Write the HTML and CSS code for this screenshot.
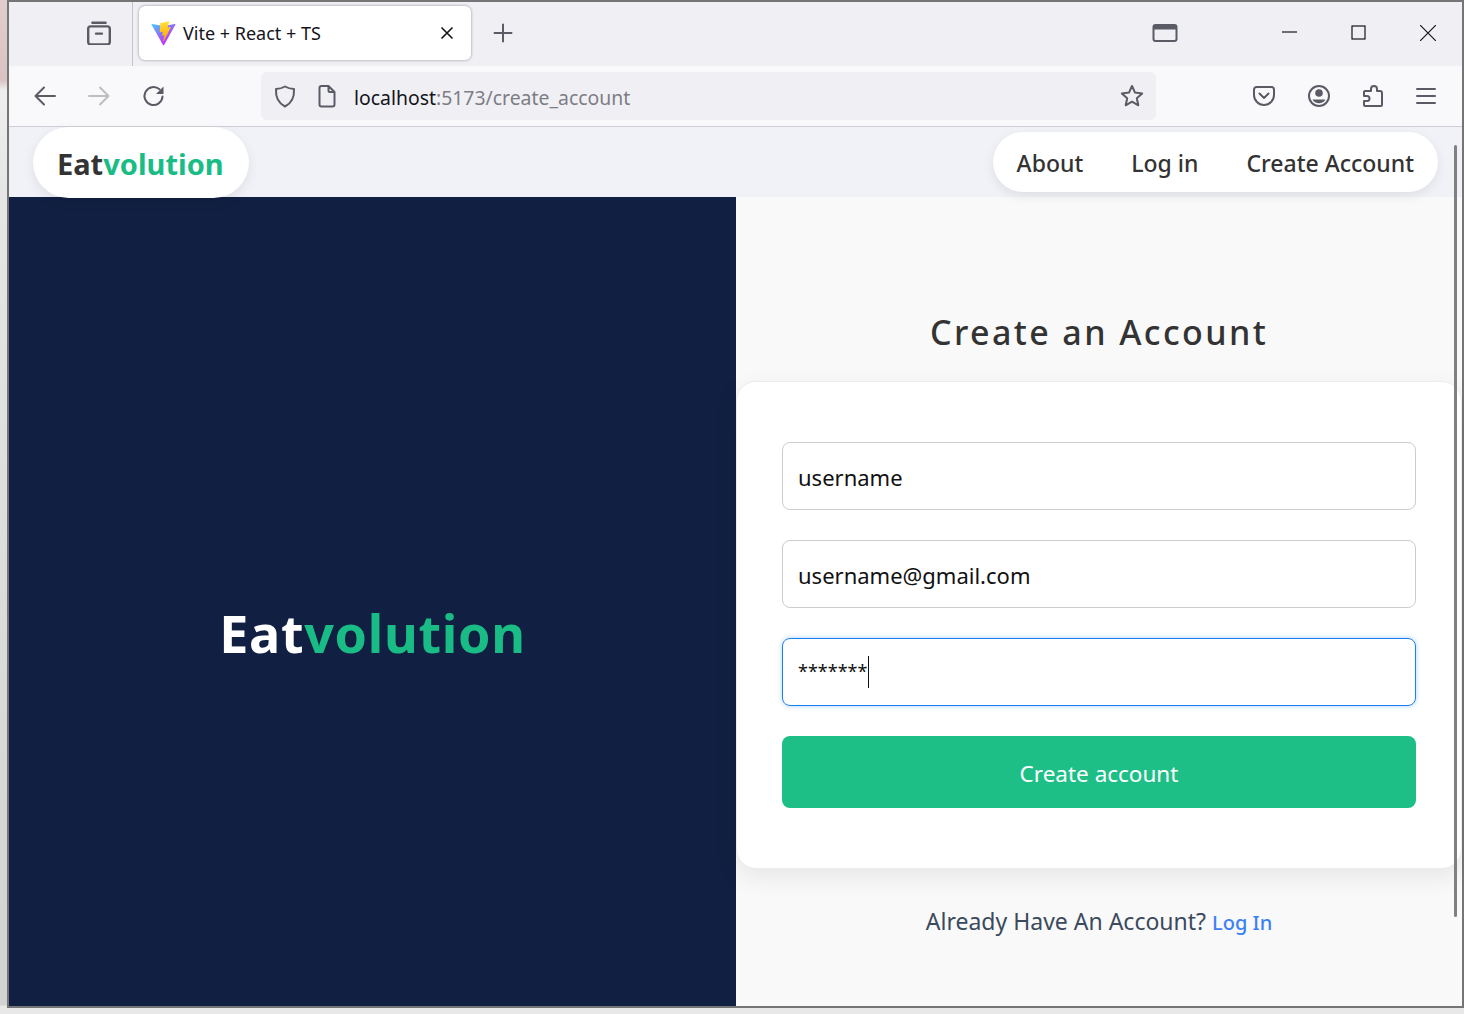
FILE: index.html
```html
<!DOCTYPE html>
<html lang="en">
<head>
  <meta charset="UTF-8">
  <title>Vite + React + TS</title>
  <link rel="stylesheet" href="styles.css">
</head>
<body>

  <div class="window">
    <!-- Tab strip -->
    <div class="tabbar">
      <div class="tab-side">
        <svg class="icon" viewBox="2 1.500 20 20"><path d="M6.500 3h11M3 8a2 2 0 0 1 2-2h14a2 2 0 0 1 2 2v11a2 2 0 0 1-2 2H5a2 2 0 0 1-2-2zM9.500 12h5"/></svg>
      </div>
      <div class="tab">
        <svg class="favicon" viewBox="0 0 410 404">
          <defs>
            <linearGradient id="viteA" x1="6" y1="33" x2="235" y2="344" gradientUnits="userSpaceOnUse"><stop offset="0" stop-color="#41D1FF"/><stop offset="1" stop-color="#BD34FE"/></linearGradient>
            <linearGradient id="viteB" x1="194" y1="8" x2="236" y2="292" gradientUnits="userSpaceOnUse"><stop offset="0" stop-color="#FFEA83"/><stop offset=".08" stop-color="#FFDD35"/><stop offset="1" stop-color="#FFA800"/></linearGradient>
          </defs>
          <path fill="url(#viteA)" d="M399.6 59.5 215 389.6c-3.8 6.8-13.6 6.9-17.5.1L9.3 59.5C5.1 52.1 11.4 43.2 19.8 44.7l184.8 33c1.2.2 2.4.2 3.6 0l180.9-33c8.4-1.5 14.700 7.300 10.500 14.800Z"/>
          <path fill="url(#viteB)" d="M292.900 1.600 156.300 28.400c-2.200.4-3.900 2.300-4 4.600l-8.400 142.100c-.2 3.300 2.900 5.900 6.100 5.200l38-8.800c3.600-.8 6.800 2.300 6.100 5.900l-11.300 55.300c-.8 3.700 2.700 6.900 6.300 5.800l23.500-7.100c3.600-1.100 7.100 2.100 6.300 5.800l-18 87c-1.100 5.400 6.100 8.400 9.100 3.700l2-3.100L323.500 104c1.900-3.700-1.300-7.900-5.400-7.100l-39.300 7.600c-3.700.7-6.800-2.700-5.800-6.300l25.700-89c1-3.700-2.200-7.100-5.800-6.400Z"/>
        </svg>
        <span class="tab-title">Vite + React + TS</span>
        <svg class="tab-close" viewBox="0 0 16 16"><path d="M2.500 2.500l11 11M13.500 2.500l-11 11"/></svg>
      </div>
      <svg class="icon new-tab" viewBox="0 0 24 24"><path d="M12 3.500v17M3.500 12h17"/></svg>
      <div class="tab-spacer"></div>
      <svg class="icon window-list" viewBox="0 0 26 20"><rect x="1.500" y="2" width="23" height="16" rx="2"/><path class="filled" d="M2 2h22v4.500H2z"/></svg>
      <div class="caption">
        <svg viewBox="0 0 16 16"><path d="M0 7h15"/></svg>
        <svg viewBox="0 0 16 16"><rect x="1" y="1" width="13" height="13"/></svg>
        <svg viewBox="0 0 16 16"><path d="M0 0l16 16M16 0L0 16"/></svg>
      </div>
    </div>

    <!-- Address bar -->
    <div class="toolbar">
      <div class="nav-buttons">
        <svg class="icon" viewBox="0 0 24 24"><path d="M22 12H2.500M11 3.500 2.500 12l8.500 8.500"/></svg>
        <svg class="icon disabled" viewBox="0 0 24 24"><path d="M2 12h19.500M13 3.500l8.500 8.500-8.500 8.500"/></svg>
        <svg class="icon" viewBox="-1 0 24 24"><path d="M20.500 12.500a9 9 0 1 1-3-7.200"/><path class="filled" d="M21.500 2.500v7.500h-7.500z"/></svg>
      </div>
      <div class="urlbar">
        <svg class="icon" viewBox="0 0 24 24"><path d="M12 2.500c3 1.800 6 2.400 9 2.600.5 8-1.500 13.500-9 17.400C4.500 18.600 2.500 13.100 3 5.100c3-.2 6-.8 9-2.600Z"/></svg>
        <svg class="icon" viewBox="0 0 24 24"><path d="M4.500 4a2 2 0 0 1 2-2h7l6 6v12.500a2 2 0 0 1-2 2h-11a2 2 0 0 1-2-2zM13.500 2v4.500a1.500 1.500 0 0 0 1.500 1.500h4.500"/></svg>
        <div class="url"><span class="host">localhost</span>:5173/create_account</div>
        <svg class="icon" viewBox="0 0 24 24"><path d="m12 2 3 6.600 7.200.8-5.400 4.800 1.500 7.100L12 17.700l-6.300 3.600 1.500-7.100L1.800 9.400 9 8.600Z"/></svg>
      </div>
      <div class="tools">
        <svg class="icon" viewBox="0 0 24 24"><path d="M4.500 3h15A2.500 2.500 0 0 1 22 5.500V11a10 10 0 0 1-20 0V5.500A2.500 2.500 0 0 1 4.500 3ZM7.500 9.500 12 14l4.500-4.500"/></svg>
        <svg class="icon" viewBox="-1 0 24 24"><circle cx="12" cy="12" r="10"/><circle class="filled" cx="12" cy="9" r="3.800"/><path class="filled" d="M5.500 15.500h13a7.500 7.500 0 0 1-13 0Z"/></svg>
        <svg class="icon" viewBox="-1 0 24 24"><path d="M4 22a1 1 0 0 1-1-1v-4h3a2.500 2.500 0 0 0 0-5H3V8a1 1 0 0 1 1-1h6V5a3 3 0 0 1 6 0v2h3a2 2 0 0 1 2 2v12a1 1 0 0 1-1 1Z"/></svg>
        <svg class="icon" viewBox="0 0 24 24"><path d="M3 5h18M3 12h18M3 19h18"/></svg>
      </div>
    </div>

    <!-- Page -->
    <div class="page">
      <header class="site-header">
        <a class="brand-pill"><span class="eat">Eat</span><span class="volution">volution</span></a>
        <nav class="site-nav">
          <a>About</a>
          <a>Log in</a>
          <a>Create Account</a>
        </nav>
      </header>

      <main class="split">
        <section class="hero">
          <div class="hero-logo"><span>Eat</span><span class="volution">volution</span></div>
        </section>

        <section class="signup">
          <h1>Create an Account</h1>
          <form class="signup-card">
            <div class="field">username</div>
            <div class="field">username@gmail.com</div>
            <div class="field focused"><span class="stars">*******</span><span class="caret"></span></div>
            <button type="button" class="submit-btn">Create account</button>
          </form>
          <p class="login-hint">Already Have An Account? <a>Log In</a></p>
        </section>
      </main>

      <div class="scroll-thumb"></div>
    </div>
  </div>

</body>
</html>
```

FILE: styles.css
```css
body {
  margin: 0;
  height: 1014px;
  overflow: hidden;
  background: linear-gradient(#e2cdcd 0, #d8c2c2 80px, #eeeeee 90px, #e6e6e6 185px, #d2d2d2 1005px, #e8e8e8 1006px);
  font-family: "Noto Sans", "Open Sans", sans-serif;
}

.window {
  width: 1457px;
  height: 1008px;
  margin-left: 7px;
  border: 2px solid #757575;
  box-sizing: border-box;
  display: flex;
  flex-direction: column;
  background: #f9f9fb;
}

.icon {
  width: 24px;
  height: 24px;
  flex: none;
  fill: none;
  stroke: #5b5b66;
  stroke-width: 2;
  stroke-linecap: round;
  stroke-linejoin: round;
}

.icon .filled {
  fill: #5b5b66;
  stroke: none;
}

.icon.disabled {
  stroke: #bdbdc2;
}

/* Tab strip */
.tabbar {
  height: 64px;
  flex: none;
  box-sizing: border-box;
  padding-bottom: 2px;
  display: flex;
  align-items: center;
  background: #f0f0f4;
}

.tab-side {
  width: 124px;
  height: 64px;
  margin-bottom: -2px;
  box-sizing: border-box;
  border-right: 1px solid #c5c5c9;
  display: flex;
  align-items: center;
  justify-content: flex-end;
  padding: 0 21px 2px 0;
  flex: none;
}

.tab {
  width: 332px;
  height: 54px;
  margin-left: 6px;
  box-sizing: border-box;
  padding: 0 16px 0 12px;
  display: flex;
  align-items: center;
  background: white;
  border-radius: 6px;
  box-shadow: 0 0 3px rgba(0, 0, 0, 0.4);
  flex: none;
}

.favicon {
  width: 25px;
  height: 25px;
  flex: none;
}

.tab-title {
  margin-left: 7px;
  flex: 1;
  font-size: 18px;
  color: #15141a;
}

.tab-close {
  width: 16px;
  height: 16px;
  fill: none;
  stroke: #15141a;
  stroke-width: 1.600;
}

.new-tab {
  margin-left: 20px;
}

.tab-spacer {
  flex: 1;
}

.window-list {
  width: 26px;
  height: 20px;
}

.caption {
  display: flex;
  align-items: center;
  gap: 53px;
  margin: 0 26px 0 104px;
}

.caption svg {
  width: 16px;
  height: 16px;
  fill: none;
  stroke: #15141a;
  stroke-width: 1.200;
}

/* Address bar */
.toolbar {
  height: 61px;
  flex: none;
  box-sizing: border-box;
  border-bottom: 1px solid #cfcfd8;
  display: flex;
  align-items: center;
  padding-left: 24px;
}

.nav-buttons {
  display: flex;
  gap: 30px;
  width: 228px;
  flex: none;
}

.urlbar {
  width: 895px;
  height: 48px;
  flex: none;
  margin-top: -1px;
  box-sizing: border-box;
  padding: 0 12px;
  display: flex;
  align-items: center;
  gap: 18px;
  background: #f0f0f4;
  border-radius: 6px;
}

.url {
  flex: 1;
  margin-left: -3px;
  padding-top: 3px;
  font-size: 19.400px;
  color: #7d7d85;
  white-space: nowrap;
}

.host {
  color: #15141a;
}

.tools {
  display: flex;
  gap: 30px;
  margin-left: 96px;
}

/* Page */
.page {
  flex: 1;
  min-height: 0;
  position: relative;
  display: flex;
  flex-direction: column;
  background: #f9f9f9;
  color: #333;
}

.site-header {
  height: 70px;
  flex: none;
  display: flex;
  justify-content: space-between;
  align-items: center;
  padding: 0 24px;
  background: #f0f2f7;
  position: relative;
  z-index: 1;
}

.brand-pill {
  height: 71px;
  box-sizing: border-box;
  padding: 2px 25px 0 24px;
  display: flex;
  align-items: center;
  background: white;
  border-radius: 36px;
  box-shadow: 0 4px 12px rgba(0, 0, 0, 0.08);
  font-size: 29px;
  font-weight: 700;
  align-self: flex-start;
}

.eat {
  color: #333;
}

.volution {
  color: #1abc85;
}

.site-nav {
  height: 60px;
  box-sizing: border-box;
  padding: 2px 24px 0;
  display: flex;
  align-items: center;
  gap: 48px;
  background: white;
  border-radius: 30px;
  box-shadow: 0 4px 12px rgba(0, 0, 0, 0.08);
  font-size: 23px;
  font-weight: 500;
}

.split {
  flex: 1;
  min-height: 0;
  display: grid;
  grid-template-columns: 727px 1fr;
}

.hero {
  background: #111f42;
  display: flex;
  align-items: center;
  justify-content: center;
  padding-top: 62px;
  color: white;
}

.hero-logo {
  font-size: 52px;
  font-weight: 700;
  letter-spacing: 0.700px;
}

.signup {
  display: flex;
  flex-direction: column;
  align-items: center;
  min-width: 0;
}

.signup h1 {
  margin: 111px 0 25px;
  font-size: 34px;
  line-height: 48px;
  font-weight: 500;
  letter-spacing: 2.400px;
  color: #333;
}

.signup-card {
  width: 100%;
  box-sizing: border-box;
  padding: 60px 45px;
  display: flex;
  flex-direction: column;
  gap: 30px;
  background: white;
  border: 1px solid #ececec;
  border-radius: 20px;
  box-shadow: 0 8px 24px rgba(0, 0, 0, 0.08);
}

.field {
  height: 68px;
  box-sizing: border-box;
  padding: 2px 15px 0;
  display: flex;
  align-items: center;
  border: 1px solid #ccc;
  border-radius: 8px;
  font-size: 22px;
  color: #111;
}

.field.focused {
  border-color: #1a7fef;
  box-shadow: 0 0 5px rgba(26, 127, 239, 0.35);
}

.stars {
  font-size: 18px;
  margin-top: -4px;
}

.caret {
  width: 1px;
  height: 32px;
  margin: -2px 0 0 1px;
  background: #111;
}

.submit-btn {
  height: 72px;
  padding-top: 4px;
  border: none;
  border-radius: 8px;
  background: #1dbf87;
  color: white;
  font: inherit;
  font-size: 22.500px;
}

.login-hint {
  margin: 36px 0 0;
  font-size: 23px;
  line-height: 32px;
  color: #3b4a5c;
}

.login-hint a {
  color: #3b82f6;
  font-size: 20px;
  font-weight: 500;
}

.scroll-thumb {
  position: absolute;
  top: 18px;
  right: 5px;
  width: 3px;
  height: 772px;
  background: #808080;
  border-radius: 2px;
  z-index: 2;
}
```
